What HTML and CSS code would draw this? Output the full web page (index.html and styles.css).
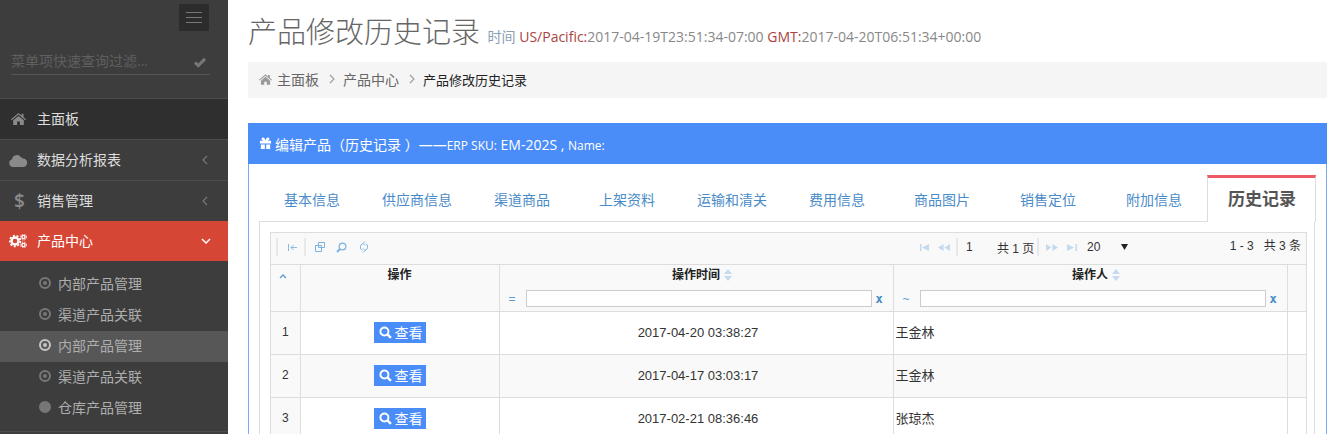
FILE: index.html
```html
<!DOCTYPE html>
<html lang="zh-CN">
<head>
<meta charset="utf-8">
<title>产品修改历史记录</title>
<link rel="stylesheet" href="styles.css">
</head>
<body>
<div class="page">
  <aside class="sidebar">
    <div class="toggler-row"><button class="toggler"><span></span><span></span><span></span></button></div>
    <div class="filter">
      <span class="filter-text">菜单项快速查询过滤...</span>
      <svg class="filter-check" viewBox="0 0 16 13"><path d="M1 7l2.5-2.5L6 7l6.5-6.5L15 3 6 12z" fill="#777"/></svg>
    </div>
    <ul class="menu">
      <li class="item home">
        <span class="ic"><svg width="15" height="12" viewBox="0 0 15 12"><path d="M7.5 0L0 6.3l.8.9L7.5 1.6l6.7 5.6.8-.9-2.5-2.1V.8h-1.9v1.7zM2.2 7.3V12h3.9V8.500h2.800V12h3.900V7.300L7.500 2.900z" fill="#8a8a8a"/></svg></span>
        <span class="lbl">主面板</span>
      </li>
      <li class="item">
        <span class="ic"><svg width="18" height="13" viewBox="0 0 18 13"><path d="M4 13a4 4 0 0 1-1-7.800A5 5 0 0 1 12 3.200 3 3 0 0 1 14 4.600 4.200 4.200 0 0 1 14 13z" fill="#8a8a8a"/></svg></span>
        <span class="lbl">数据分析报表</span>
        <svg class="arrow" width="6" height="10" viewBox="0 0 6 10"><path d="M5 1L1 5l4 4" fill="none" stroke="#777" stroke-width="1.200"/></svg>
      </li>
      <li class="item last">
        <span class="ic dollar">$</span>
        <span class="lbl">销售管理</span>
        <svg class="arrow" width="6" height="10" viewBox="0 0 6 10"><path d="M5 1L1 5l4 4" fill="none" stroke="#777" stroke-width="1.200"/></svg>
      </li>
      <li class="item open">
        <span class="ic"><svg width="18" height="14" viewBox="0 0 18 14"><circle cx="6" cy="7" r="3.500" fill="none" stroke="#fff" stroke-width="2.400"/><circle cx="6" cy="7" r="5.300" fill="none" stroke="#fff" stroke-width="1.800" stroke-dasharray="2 1.700"/><circle cx="14.500" cy="3" r="1.600" fill="none" stroke="#fff" stroke-width="1.400"/><circle cx="14.500" cy="3" r="3" fill="none" stroke="#fff" stroke-width="1" stroke-dasharray="1.300 1.100"/><circle cx="14.500" cy="11" r="1.600" fill="none" stroke="#fff" stroke-width="1.400"/><circle cx="14.500" cy="11" r="3" fill="none" stroke="#fff" stroke-width="1" stroke-dasharray="1.300 1.100"/></svg></span>
        <span class="lbl">产品中心</span>
        <svg class="arrow down" width="10" height="6" viewBox="0 0 10 6"><path d="M1 1l4 4 4-4" fill="none" stroke="#fff" stroke-width="1.500"/></svg>
      </li>
    </ul>
    <ul class="submenu">
      <li class="sub"><i class="dot"></i>内部产品管理</li>
      <li class="sub"><i class="dot"></i>渠道产品关联</li>
      <li class="sub current"><i class="dot"></i>内部产品管理</li>
      <li class="sub"><i class="dot"></i>渠道产品关联</li>
      <li class="sub"><i class="dot solid"></i>仓库产品管理</li>
    </ul>
  </aside>

  <main class="main">
    <h1 class="title">产品修改历史记录 <small class="stamp"><span class="stamp-key">时间</span> <b>US/Pacific:</b>2017-04-19T23:51:34-07:00 <b>GMT:</b>2017-04-20T06:51:34+00:00</small></h1>

    <nav class="crumbs">
      <svg class="crumb-home" width="13" height="11" viewBox="0 0 15 12"><path d="M7.5 0L0 6.3l.8.9L7.500 1.600l6.700 5.600.8-.9-2.500-2.100V.8h-1.900v1.700zM2.200 7.300V12h3.900V8.500h2.800V12h3.900V7.300L7.500 2.900z" fill="#999"/></svg>
      <span>主面板</span>
      <svg class="sep" width="6" height="10" viewBox="0 0 6 10"><path d="M1 1l4 4-4 4" fill="none" stroke="#999" stroke-width="1.100"/></svg>
      <span>产品中心</span>
      <svg class="sep" width="6" height="10" viewBox="0 0 6 10"><path d="M1 1l4 4-4 4" fill="none" stroke="#999" stroke-width="1.100"/></svg>
      <span class="here">产品修改历史记录</span>
    </nav>

    <section class="portlet">
      <header class="portlet-title">
        <svg width="13" height="13" viewBox="0 0 14 13"><path d="M1 3.500h12V6.500H1zM2 7.500h4.300V12.500H2zM7.700 7.500H12V12.500H7.700zM6.300 3.500C4 3.500 2.800 2.700 2.800 1.600 2.800.6 3.600 0 4.400 0 5.600 0 6.500 1.300 7 3 7.500 1.300 8.400 0 9.600 0c.8 0 1.600.6 1.600 1.600 0 1.100-1.200 1.900-3.500 1.900z" fill="#fff"/></svg>
        <span class="cap">编辑产品（历史记录 ）——<span class="cap-sm">ERP SKU:</span> EM-202S , <span class="cap-sm">Name:</span></span>
      </header>
      <div class="portlet-body">
        <ul class="tabs">
          <li class="tab">基本信息</li>
          <li class="tab">供应商信息</li>
          <li class="tab">渠道商品</li>
          <li class="tab">上架资料</li>
          <li class="tab">运输和清关</li>
          <li class="tab">费用信息</li>
          <li class="tab">商品图片</li>
          <li class="tab">销售定位</li>
          <li class="tab">附加信息</li>
          <li class="tab active">历史记录</li>
        </ul>
        <div class="tab-pane">
          <div class="grid">
            <div class="toolbar">
              <div class="tools">
                <i class="vbar"></i>
                <svg class="tool t-first" width="9" height="9" viewBox="0 0 9 9"><path d="M.5 1v7M9 4.500H3M5.500 2L3 4.500 5.500 7" fill="none" stroke="#8db9de" stroke-width="1"/></svg>
                <i class="vbar"></i>
                <svg class="tool t-win" width="10" height="10" viewBox="0 0 10 10"><path d="M3.500.5h6v5h-6zM.5 3.500h6v6h-6z" fill="none" stroke="#7fb2de"/></svg>
                <svg class="tool t-find" width="11" height="11" viewBox="0 0 11 11"><circle cx="6.500" cy="4.500" r="3.400" fill="none" stroke="#7fb2de" stroke-width="1.200"/><path d="M4 7L1 10" stroke="#7fb2de" stroke-width="2"/></svg>
                <svg class="tool t-sync" width="10" height="12" viewBox="0 0 10 12"><path d="M7 2.500a4 4 0 0 1-1 7M3 9.500a4 4 0 0 1 1-7M6 .5L4 2.500l2 2M4 7.500l2 2-2 2" fill="none" stroke="#7fb2de"/></svg>
              </div>
              <div class="pager">
                <svg width="10" height="7" viewBox="0 0 10 7"><path d="M0 0h1.500v7H0zM9 0v7L2 3.500z" fill="#c5daec"/></svg>
                <svg class="pg-prev" width="12" height="7" viewBox="0 0 12 7"><path d="M5.500 0v7L0 3.500zM12 0v7L6.500 3.500z" fill="#c5daec"/></svg>
                <i class="vbar pg-bar"></i>
                <span class="pg-num">1</span>
                <span class="pg-total">共 1 页</span>
                <i class="vbar"></i>
                <svg class="pg-next" width="12" height="7" viewBox="0 0 12 7"><path d="M0 0v7l5.500-3.500zM6.500 0v7L12 3.500z" fill="#c5daec"/></svg>
                <svg class="pg-last" width="10" height="7" viewBox="0 0 10 7"><path d="M0 0v7l7-3.500zM8.500 0H10v7H8.500z" fill="#c5daec"/></svg>
                <span class="pg-size">20</span>
                <svg class="pg-caret" width="7" height="6" viewBox="0 0 7 6"><path d="M0 0h7L3.500 6z" fill="#222"/></svg>
              </div>
              <div class="count">1 - 3 &nbsp; 共 3 条</div>
            </div>
            <table class="data">
              <colgroup><col class="c-num"><col class="c-act"><col class="c-time"><col class="c-user"><col class="c-scroll"></colgroup>
              <thead>
                <tr>
                  <th><svg class="head-caret" width="8" height="5" viewBox="0 0 8 5"><path d="M1 4l3-3 3 3" fill="none" stroke="#5b9bd5" stroke-width="1.300"/></svg></th>
                  <th>操作</th>
                  <th>
                    <div class="th-name">操作时间<svg class="sort" width="8" height="12" viewBox="0 0 8 12"><path d="M4 0l4 5H0zM4 12L0 7h8z" fill="#c5daec"/></svg></div>
                    <div class="th-filter"><span class="op">=</span><input class="fi" type="text"><span class="clr">x</span></div>
                  </th>
                  <th>
                    <div class="th-name">操作人<svg class="sort" width="8" height="12" viewBox="0 0 8 12"><path d="M4 0l4 5H0zM4 12L0 7h8z" fill="#c5daec"/></svg></div>
                    <div class="th-filter"><span class="op">~</span><input class="fi" type="text"><span class="clr">x</span></div>
                  </th>
                  <th></th>
                </tr>
              </thead>
              <tbody>
                <tr><td class="num">1</td><td class="ctr"><a class="view"><svg width="13" height="13" viewBox="0 0 12 12"><circle cx="5" cy="5" r="3.700" fill="none" stroke="#fff" stroke-width="1.800"/><path d="M7.800 7.800L11 11" stroke="#fff" stroke-width="2.200"/></svg>查看</a></td><td class="ctr when">2017-04-20 03:38:27</td><td class="who">王金林</td><td></td></tr>
                <tr class="alt"><td class="num">2</td><td class="ctr"><a class="view"><svg width="13" height="13" viewBox="0 0 12 12"><circle cx="5" cy="5" r="3.700" fill="none" stroke="#fff" stroke-width="1.800"/><path d="M7.800 7.800L11 11" stroke="#fff" stroke-width="2.200"/></svg>查看</a></td><td class="ctr when">2017-04-17 03:03:17</td><td class="who">王金林</td><td></td></tr>
                <tr><td class="num">3</td><td class="ctr"><a class="view"><svg width="13" height="13" viewBox="0 0 12 12"><circle cx="5" cy="5" r="3.700" fill="none" stroke="#fff" stroke-width="1.800"/><path d="M7.800 7.800L11 11" stroke="#fff" stroke-width="2.200"/></svg>查看</a></td><td class="ctr when">2017-02-21 08:36:46</td><td class="who">张琼杰</td><td></td></tr>
              </tbody>
            </table>
          </div>
        </div>
      </div>
    </section>
  </main>
</div>
</body>
</html>
```

FILE: styles.css
```css
* { box-sizing: border-box; }
html, body { margin: 0; padding: 0; height: 434px; overflow: hidden; background: #fff; }
body { font-family: "Open Sans", "Noto Sans CJK SC", sans-serif; font-size: 14px; color: #333; }
ul { list-style: none; margin: 0; padding: 0; }

.page { display: flex; height: 434px; overflow: hidden; }

/* Sidebar */
.sidebar { width: 228px; flex: none; background: #3d3d3d; height: 434px; overflow: hidden; }
.toggler-row { display: flex; justify-content: flex-end; padding: 4px 19px 0 0; }
.toggler { width: 30px; height: 27px; background: #2c2c2c; border: 0; padding: 0; display: flex; flex-direction: column; gap: 4px; align-items: center; justify-content: center; }
.toggler span { display: block; width: 16px; height: 1px; background: #777; }
.filter { margin: 17px 18px 0 11px; height: 27px; border-bottom: 1px solid #555; display: flex; align-items: center; justify-content: space-between; padding-right: 3px; }
.filter-text { color: #5f5f5f; font-size: 14px; line-height: 18px; }
.filter-check { width: 14px; height: 12px; margin-top: 4px; }
.menu { margin-top: 23px; border-top: 1px solid #4c4c4c; }
.item { height: 41px; display: flex; align-items: center; color: #ddd; border-bottom: 1px solid #4c4c4c; }
.item.home { background: #2f2f2f; }
.item.last { height: 40px; border-bottom: 0; }
.item.open { background: #d64635; color: #fff; height: 40px; border-bottom: 0; }
.ic { width: 37px; padding-left: 9px; flex: none; display: flex; align-items: center; }
.home .ic { padding-left: 11px; }
.ic.dollar { padding-left: 14px; font-size: 19px; font-weight: 600; color: #8a8a8a; line-height: 20px; }
.lbl { flex: 1; line-height: 20px; }
.arrow { margin-right: 20px; }
.arrow.down { margin-right: 17px; }
.submenu { padding: 8px 0 7px; border-bottom: 1px solid #4c4c4c; }
.sub { height: 31px; display: flex; align-items: center; padding: 0 0 4px 39px; color: #aeaeae; font-size: 14px; }
.sub.current { background: #575757; }
.dot { width: 12px; height: 12px; border-radius: 50%; border: 2px solid #777; margin-right: 7px; display: block; position: relative; flex: none; }
.dot::after { content: ""; position: absolute; left: 2px; top: 2px; width: 4px; height: 4px; border-radius: 50%; background: #777; }
.current .dot { border-color: #c4c4c4; }
.current .dot::after { background: #c4c4c4; }
.dot.solid { background: #777; }

/* Main */
.main { flex: 1; min-width: 0; padding: 0 6px 0 20px; overflow: hidden; }
.title { margin: 0; height: 62px; padding-top: 11px; font-size: 29px; line-height: 42px; font-weight: 300; color: #666; white-space: nowrap; }
.stamp { font-size: 14px; font-weight: 400; color: #888; vertical-align: 1px; }
.stamp-key { color: #8a9db3; }
.stamp b { font-weight: 400; color: #a94442; }
.crumbs { height: 36px; background: #f5f5f5; display: flex; align-items: center; padding: 0 0 2px 11px; font-size: 14px; color: #666; }
.crumb-home { margin-right: 5px; }
.crumbs .sep { margin: 0 8px 0 10px; }
.crumbs .here { font-size: 13px; color: #222; }

.portlet { margin-top: 25px; border: 1px solid #7aa9f9; border-top: 0; }
.portlet-title { height: 41px; background: #4b8df8; color: #fff; display: flex; align-items: center; padding-left: 11px; margin: 0 -1px; white-space: nowrap; }
.portlet-title svg { margin-right: 3px; }
.cap { font-size: 14px; }
.cap-sm { font-size: 12px; }
.portlet-body { padding: 11px 10px 0; }

.tabs { display: grid; grid-template-columns: 98px 112px 105px 98px 112px 105px 106px 106px 102px 109px; margin-left: 4px; height: 46px; width: 1053px; }
.tab { padding: 13px 0 0 21px; color: #4a8bc9; font-size: 14px; line-height: 24px; white-space: nowrap; }
.tab.active { position: relative; z-index: 1; border-top: 3px solid #ed5b62; border-left: 1px solid #ddd; border-right: 1px solid #ddd; height: 47px; padding: 9px 0 0 20px; font-size: 17px; font-weight: 700; color: #555; line-height: 24px; background: #fff; }
.tab-pane { border: 1px solid #ddd; padding: 10px 9px 0 10px; width: 1056px; }

.grid { border: 1px solid #ddd; border-bottom: 0; width: 1037px; }
.toolbar { height: 32px; padding-bottom: 3px; background: #f9f9f9; border-bottom: 1px solid #ddd; display: flex; align-items: center; position: relative; font-family: "Liberation Sans", "Noto Sans CJK SC", sans-serif; font-size: 12px; color: #333; }
.tools { display: flex; align-items: center; padding-left: 5px; }
.vbar { display: block; width: 2px; height: 18px; background: #e8e8e8; }
.t-first { margin: 0 7px 0 10px; }
.t-win { margin-left: 9px; }
.t-find { margin-left: 11px; }
.t-sync { margin-left: 12px; }
.pager { position: absolute; left: 649px; top: 0; height: 28px; display: flex; align-items: center; }
.pg-prev { margin-left: 8px; }
.pg-bar { margin-left: 6px; }
.pg-num { margin-left: 8px; width: 31px; }
.pg-total { width: 40px; }
.pg-next { margin-left: 7px; }
.pg-last { margin-left: 9px; }
.pg-size { margin-left: 10px; width: 34px; }
.count { position: absolute; right: 5px; top: 0; line-height: 27px; }

.data { border-collapse: collapse; table-layout: fixed; width: 1035px; font-family: "Liberation Sans", "Noto Sans CJK SC", sans-serif; font-size: 13px; color: #333; }
.c-num { width: 29px; }
.c-act { width: 199px; }
.c-time { width: 394px; }
.c-user { width: 394px; }
.c-scroll { width: 19px; }
th { height: 46px; background: #f9f9f9; border: 1px solid #ddd; border-top: 0; padding: 0; vertical-align: top; font-size: 12px; font-weight: 700; color: #222; line-height: 16px; text-align: center; }
th:first-child, td:first-child { border-left: 0; }
th:last-child, td:last-child { border-right: 0; }
th:nth-child(2) { padding-top: 2px; }
.head-caret { display: block; margin: 9px 0 0 8px; }
.th-name { padding-top: 2px; height: 25px; display: flex; justify-content: center; align-items: flex-start; }
.sort { margin: 2px -12px 0 4px; }
.th-filter { display: flex; align-items: center; height: 17px; padding-left: 9px; font-weight: 400; }
.op { width: 17px; color: #5b9bd5; text-align: left; font-size: 12px; }
.fi { width: 346px; height: 17px; border: 1px solid #ccc; background: #fff; padding: 0; margin: 0; flex: none; }
.clr { width: 15px; color: #428bca; font-weight: 700; font-family: "DejaVu Sans Mono", monospace; font-size: 12px; text-align: center; }
td { height: 43px; border: 1px solid #ddd; padding: 0 2px; vertical-align: middle; background: #fff; }
.alt td { background: #f9f9f9; }
td.num { background: #f9f9f9; text-align: center; font-size: 12px; padding-bottom: 2px; }
.ctr { text-align: center; }
td.when { padding: 0 0 1px 4px; }
td.who { padding-bottom: 2px; }
.view { display: inline-flex; align-items: center; height: 21px; width: 52px; background: #4b8df8; color: #fff; font-size: 14px; padding-left: 5px; gap: 3px; vertical-align: middle; margin-top: -1px; }
```
